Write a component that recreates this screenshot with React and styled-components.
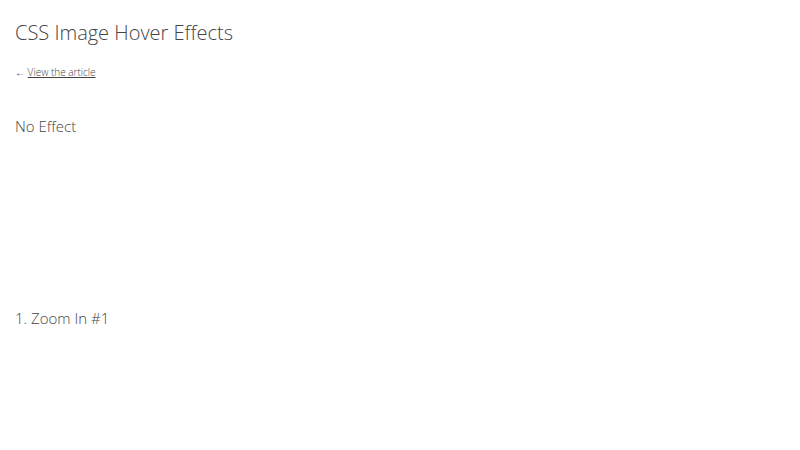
import React from 'react';
import styled, { createGlobalStyle } from 'styled-components';

const GlobalStyle = createGlobalStyle`
  body {
    margin: 0;
    background: #fff;
    font-family: 'Open Sans', 'Liberation Sans', sans-serif;
    font-weight: 300;
    color: #444;
  }
`;

const Page = styled.div`
  padding: 18px 15px 0;
`;

const Title = styled.h1`
  margin: 0;
  font-size: 20px;
  font-weight: 300;
  line-height: 30px;
`;

const Back = styled.p`
  margin: 16px 0 0;
  font-size: 10px;
  line-height: 16px;
  font-weight: 300;

  a {
    color: #444;
    text-decoration: underline;
  }
`;

const Section = styled.section`
  margin-top: ${(p) => (p.$first ? '34px' : '0')};
`;

const Heading = styled.h2`
  margin: 0;
  font-size: 15px;
  font-weight: 300;
  line-height: 24px;
`;

const Figure = styled.div`
  height: 168px;
`;

const demos = ['No Effect', '1. Zoom In #1'];

const App = () => (
  <Page>
    <GlobalStyle />
    <Title>CSS Image Hover Effects</Title>
    <Back>
      ← <a href="#article">View the article</a>
    </Back>
    {demos.map((name, i) => (
      <Section key={name} $first={i === 0}>
        <Heading>{name}</Heading>
        <Figure />
      </Section>
    ))}
  </Page>
);

export default App;
